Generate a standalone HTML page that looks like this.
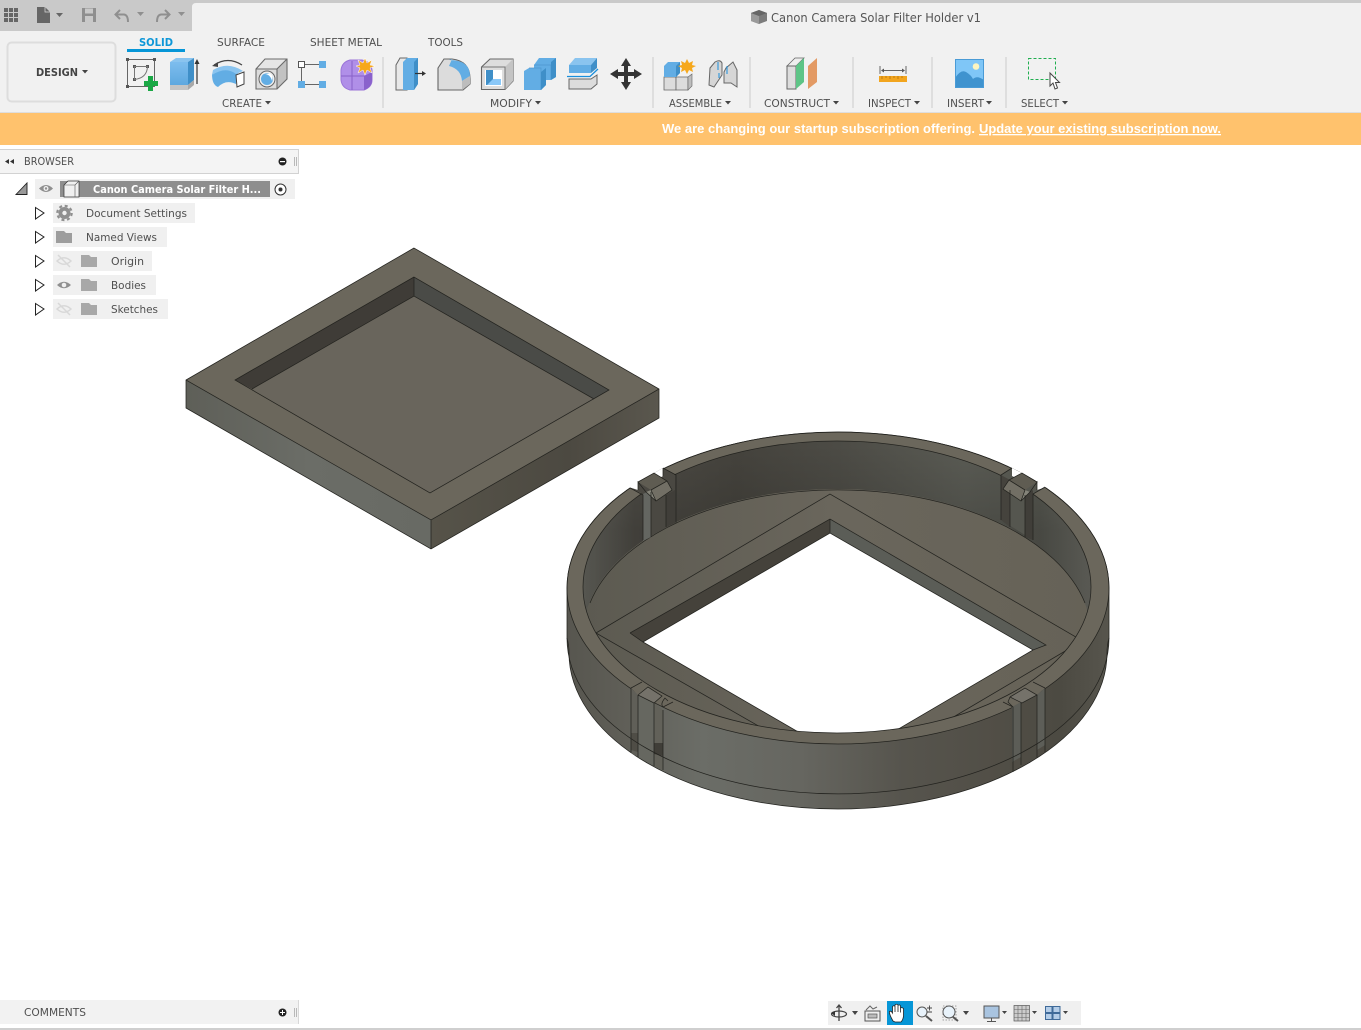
<!DOCTYPE html>
<html><head><meta charset="utf-8"><title>Canon Camera Solar Filter Holder v1</title>
<style>
html,body{margin:0;padding:0;background:#fff;width:1361px;height:1030px;overflow:hidden}
svg{display:block}
text{font-family:"DejaVu Sans","Liberation Sans",sans-serif;fill:#4f4f4f;font-size:11px}
.b{font-family:"Liberation Sans",Arial,sans-serif;font-weight:bold;fill:#fff;font-size:13px}
.e{fill:none;stroke:#23231f;stroke-width:.75}
</style></head><body>
<svg width="1361" height="1030" viewBox="0 0 1361 1030" xmlns="http://www.w3.org/2000/svg">
<defs>
<linearGradient id="fw" gradientUnits="userSpaceOnUse" x1="567" y1="0" x2="1109" y2="0">
<stop offset="0" stop-color="#57564f"/><stop offset=".1" stop-color="#5f5e57"/><stop offset=".25" stop-color="#6b6d67"/><stop offset=".43" stop-color="#666660"/><stop offset=".62" stop-color="#56544d"/><stop offset=".8" stop-color="#514e46"/><stop offset=".91" stop-color="#4c4a42"/><stop offset="1" stop-color="#57554d"/></linearGradient>
<linearGradient id="iw" gradientUnits="userSpaceOnUse" x1="584" y1="0" x2="1091" y2="0">
<stop offset="0" stop-color="#66665f"/><stop offset=".1" stop-color="#4d4b45"/><stop offset=".3" stop-color="#45433d"/><stop offset=".5" stop-color="#4c4b45"/><stop offset=".75" stop-color="#5a5b54"/><stop offset=".9" stop-color="#55564f"/><stop offset="1" stop-color="#6a6a63"/></linearGradient>
<linearGradient id="iwv" gradientUnits="userSpaceOnUse" x1="0" y1="445" x2="0" y2="530">
<stop offset="0" stop-color="#000" stop-opacity="0"/><stop offset="1" stop-color="#000" stop-opacity=".16"/></linearGradient>
<linearGradient id="fl" gradientUnits="userSpaceOnUse" x1="584" y1="0" x2="1091" y2="0">
<stop offset="0" stop-color="#5c5a51"/><stop offset=".5" stop-color="#6a665c"/><stop offset="1" stop-color="#666257"/></linearGradient>
<linearGradient id="pr" gradientUnits="userSpaceOnUse" x1="431" y1="0" x2="659" y2="0">
<stop offset="0" stop-color="#565349"/><stop offset=".6" stop-color="#4c4941"/><stop offset="1" stop-color="#5a574e"/></linearGradient>
<linearGradient id="pl" gradientUnits="userSpaceOnUse" x1="186" y1="0" x2="431" y2="0">
<stop offset="0" stop-color="#5e5f58"/><stop offset=".5" stop-color="#6b6d67"/><stop offset="1" stop-color="#686a64"/></linearGradient>
<linearGradient id="pw" gradientUnits="userSpaceOnUse" x1="414" y1="277" x2="405" y2="292">
<stop offset="0" stop-color="#58594f"/><stop offset=".5" stop-color="#464743"/><stop offset="1" stop-color="#56574f"/></linearGradient>
<linearGradient id="pw2" gradientUnits="userSpaceOnUse" x1="520" y1="335" x2="511" y2="350">
<stop offset="0" stop-color="#5a5b54"/><stop offset=".5" stop-color="#474844"/><stop offset="1" stop-color="#585952"/></linearGradient>
<linearGradient id="blu" x1="0" y1="0" x2="0" y2="1"><stop offset="0" stop-color="#7dbdee"/><stop offset="1" stop-color="#5ea8df"/></linearGradient>
<clipPath id="ci"><ellipse cx="837" cy="587" rx="254" ry="146"/></clipPath>
</defs>

<!-- top chrome -->
<rect x="0" y="0" width="1361" height="113" fill="#f1f1f1"/>
<rect x="0" y="0" width="1361" height="3" fill="#cacaca"/>
<path d="M0,0H196V3Q192,3 192,7V31H0Z" fill="#c9c9c9"/>
<rect x="0" y="112" width="1361" height="1" fill="#dedede"/>
<!-- top-left icons -->
<g fill="#666"><rect x="4" y="8" width="4" height="4"/><rect x="9" y="8" width="4" height="4"/><rect x="14" y="8" width="4" height="4"/><rect x="4" y="13" width="4" height="4"/><rect x="9" y="13" width="4" height="4"/><rect x="14" y="13" width="4" height="4"/><rect x="4" y="18" width="4" height="4"/><rect x="9" y="18" width="4" height="4"/><rect x="14" y="18" width="4" height="4"/></g>
<path d="M37,7H45L50,12V23H37Z" fill="#666"/><path d="M45,7V12H50" fill="none" stroke="#ddd" stroke-width=".7"/>
<path d="M56,13H63L59.500,17Z" fill="#666"/>
<path d="M82,8H96V22H82Z" fill="#8f8f8f"/><rect x="85" y="8.500" width="8" height="5" fill="#c9c9c9"/><rect x="85" y="16" width="8" height="6" fill="#c9c9c9"/>
<path d="M120,10L115.500,14.500L120,19M116,14.500H124Q128,15 128,22" fill="none" stroke="#8f8f8f" stroke-width="2"/>
<path d="M137,12H144L140.500,16Z" fill="#8f8f8f"/>
<path d="M165,10L169.500,14.500L165,19M169,14.500H161Q157,15 157,22" fill="none" stroke="#8f8f8f" stroke-width="2"/>
<path d="M178,12H185L181.500,16Z" fill="#8f8f8f"/>
<!-- title -->
<path d="M751,13L759,10L767,13V21L759,24L751,21Z" fill="#7c7c7c"/><path d="M751,13L759,16V24L751,21Z" fill="#9a9a9a"/><path d="M751,13L759,10L767,13L759,16Z" fill="#666"/>
<text x="771" y="22" style="font-size:12px;fill:#555" textLength="210" lengthAdjust="spacingAndGlyphs">Canon Camera Solar Filter Holder v1</text>

<!-- design button -->
<rect x="7.500" y="42.500" width="108" height="59" rx="4" fill="#f1f1f1" stroke="#dddddd" stroke-width="2"/>
<text x="36" y="76" style="font-weight:bold;fill:#444" textLength="42" lengthAdjust="spacingAndGlyphs">DESIGN</text>
<path d="M82,70H88L85,73.500Z" fill="#444"/>
<!-- tabs -->
<text x="139" y="46" style="fill:#0e97d8;font-weight:bold" textLength="34" lengthAdjust="spacingAndGlyphs">SOLID</text>
<rect x="127" y="49" width="58" height="3" fill="#0696d7"/>
<text x="217" y="46" textLength="48" lengthAdjust="spacingAndGlyphs">SURFACE</text>
<text x="310" y="46" textLength="72" lengthAdjust="spacingAndGlyphs">SHEET METAL</text>
<text x="428" y="46" textLength="35" lengthAdjust="spacingAndGlyphs">TOOLS</text>

<!-- sketch icon -->
<rect x="127.500" y="59.500" width="27" height="27" fill="none" stroke="#666"/>
<g fill="#555"><rect x="126" y="58" width="3" height="3"/><rect x="153" y="58" width="3" height="3"/><rect x="126" y="85" width="3" height="3"/><rect x="133" y="65" width="3" height="3"/><rect x="146" y="65" width="3" height="3"/><rect x="133" y="78" width="3" height="3"/></g>
<path d="M134.500,66.500H147.500Q147,78 134.500,79.500Z" fill="none" stroke="#777"/>
<path d="M148,76H153V81H158V86H153V91H148V86H144V81H148Z" fill="#1aa845"/>
<!-- extrude -->
<path d="M170,85H188V62H170Z" fill="url(#blu)"/><path d="M170,62L176,58H194L188,62Z" fill="#8ac4ef"/><path d="M188,62L194,58V80L188,85Z" fill="#3f8fc8"/>
<path d="M170,85H188V90H170Z" fill="#c4c4c4"/><path d="M188,85L194,80V85L188,90Z" fill="#a9a9a9"/>
<path d="M197,84V62" stroke="#333" stroke-width="1.200"/><path d="M194.500,64L197,59L199.500,64Z" fill="#333"/>
<!-- revolve -->
<path d="M214,65Q228,56 242,65" fill="none" stroke="#444" stroke-width="1.200"/><path d="M212,66L218,62V67Z" fill="#444"/>
<path d="M212,74Q228,62 238,72L236,84Q226,79 218,87Q212,85 212,74Z" fill="#62ade4"/><path d="M212,75Q226,66 236,74L243,71Q228,61 213,70Z" fill="#8ac4ef"/>
<path d="M236,75L244,72V84L237,87Z" fill="#fff" stroke="#444"/>
<!-- hole -->
<path d="M277,69L287,59V79L277,89Z" fill="#c2c2c2"/><path d="M256,69L265,59H287L277,69Z" fill="#e6e6e6"/><rect x="256" y="69" width="21" height="20" fill="#dcdcdc"/>
<path d="M256,69L265,59H287V79L277,89H256ZM256,69H277V89M277,69L287,59" fill="none" stroke="#6b6b6b" stroke-width="1.100"/>
<circle cx="267" cy="79" r="8" fill="#eee" stroke="#666"/><circle cx="267" cy="79" r="6" fill="#62ade4"/><path d="M262,74Q270,73 272,81Q274,76 270,73.500Z" fill="#fff"/>
<!-- pattern/ box -->
<rect x="298.500" y="61.500" width="6" height="6" fill="#fff" stroke="#555"/><rect x="319" y="61" width="7" height="7" fill="#62ade4"/><rect x="298" y="81" width="7" height="7" fill="#62ade4"/><rect x="319" y="81" width="7" height="7" fill="#62ade4"/>
<path d="M305,64.500H319M305,84.500H319M301.500,68V81" stroke="#666"/>
<!-- create form -->
<path d="M341,70Q342,62 350,60H362Q371,62 372,70V80Q372,87 364,90H350Q342,88 341,80Z" fill="#b08fe8" stroke="#9a74d8"/><path d="M341,76H364M352,61V90" stroke="#8862c8" fill="none"/><path d="M364,76L372,72V80Q372,87 364,90Z" fill="#8a62cc"/>
<path d="M365,58L367,63L372,60L370,65L375,66L370,68L372,73L367,70L365,75L363,70L358,73L360,68L356,66L360,65L358,60L363,63Z" fill="#f6a81c" stroke="#fff" stroke-width=".5"/>
<text x="222" y="107" textLength="40" lengthAdjust="spacingAndGlyphs">CREATE</text><path d="M265,101H271L268,104.500Z" fill="#444"/>
<rect x="382" y="57" width="2" height="51" fill="#dedede"/>

<!-- press pull -->
<path d="M396,65L400,58H407V90H396Z" fill="#e8e8e8" stroke="#666"/><path d="M403,62L407,58H418V84L414,90H403Z" fill="#62ade4"/><path d="M414,62V90L418,84V58Z" fill="#3f8fc8"/>
<path d="M415,73.500H423" stroke="#333" stroke-width="1.200"/><path d="M422,71L426,73.500L422,76Z" fill="#333"/>
<!-- fillet -->
<path d="M438,68L444,59H452Q470,61 470,79V84L463,90H438Z" fill="#dcdcdc" stroke="#666" stroke-width="1.100"/><path d="M449,60Q470,60 470,76L462,81Q461,69 449,66L452,59Z" fill="#62ade4"/><path d="M462,90V81L470,76V84Z" fill="#bdbdbd"/>
<!-- shell -->
<path d="M481.500,67L490,59H513V81L505,89.500H481.500Z" fill="#ddd" stroke="#666" stroke-width="1.100"/><path d="M505,67L513,59V81L505,89.500Z" fill="#c4c4c4"/><path d="M481.500,67H505V89.500" fill="none" stroke="#777"/>
<rect x="485" y="70" width="17" height="16" fill="#fff"/><path d="M486,70H493V79H501V85H486Z" fill="#3f8fc8"/><path d="M493,79H501V85H487Z" fill="#8ac8f8"/>
<!-- combine -->
<path d="M524,71L529,68H534V65L539,58H556V77L551,80H546V85L541,90H524Z" fill="#62ade4"/><path d="M534,65H551V80M529,68H541V90" fill="none" stroke="#4d97cf" stroke-width=".7"/><path d="M551,62L556,58V77L551,80Z" fill="#3f8fc8"/><path d="M541,72L546,68V85L541,90Z" fill="#3f8fc8"/>
<!-- split -->
<path d="M569,65L575,58H597L591,65Z" fill="#8ac4ef"/><rect x="569" y="65" width="22" height="8" fill="#62ade4"/><path d="M591,65L597,58V68L591,73Z" fill="#3f8fc8"/>
<path d="M567,76.500H590L598,69" fill="none" stroke="#1a8fdc" stroke-width="1.300"/>
<path d="M569,79H591L597,75V84L591,89H569Z" fill="#dcdcdc" stroke="#666"/>
<!-- move -->
<path d="M626,58L631,66H628V72H634V69L642,74L634,79V76H628V82H631L626,90L621,82H624V76H618V79L610,74L618,69V72H624V66H621Z" fill="#333"/>
<text x="490" y="107" textLength="42" lengthAdjust="spacingAndGlyphs">MODIFY</text><path d="M535,101H541L538,104.500Z" fill="#444"/>
<rect x="652" y="57" width="2" height="51" fill="#dedede"/>
<!-- new component -->
<path d="M664,77H676V90H664Z" fill="#dcdcdc" stroke="#666" stroke-width=".8"/><path d="M676,77H688V90H676Z" fill="#dcdcdc" stroke="#666" stroke-width=".8"/><path d="M688,77L692,74V86L688,90Z" fill="#bdbdbd" stroke="#666" stroke-width=".6"/>
<path d="M664,66L668,62H680V73L676,77H664Z" fill="#62ade4"/><path d="M676,66L680,62V73L676,77Z" fill="#3f8fc8"/>
<path d="M687,59L689,63L693,61L692,65L696,66L692,68L693,72L689,70L687,74L685,70L681,72L682,68L678,66L682,65L681,61L685,63Z" fill="#f6a81c"/>
<!-- joint -->
<path d="M710,68L715,62Q720,59 722,63V75L714,87L709,85Z" fill="#d6d6d6" stroke="#666"/><path d="M726,68L733,62L737,70V87L731,83H724V72Z" fill="#d6d6d6" stroke="#666"/>
<path d="M718,62V70M727,66V74M719,73V78" stroke="#1a8fdc" stroke-width="1" fill="none"/>
<text x="669" y="107" textLength="53" lengthAdjust="spacingAndGlyphs">ASSEMBLE</text><path d="M725,101H731L728,104.500Z" fill="#444"/>
<rect x="749" y="57" width="2" height="51" fill="#dedede"/>
<!-- construct -->
<path d="M787,66L795,58H804L796,66Z" fill="#eee" stroke="#666" stroke-width=".8"/><path d="M787,66H796V89H787Z" fill="#ddd" stroke="#666"/><path d="M796,66L804,58V82L796,89Z" fill="#5dc486"/><path d="M808,66L817,58V82L808,89Z" fill="#e39a64"/>
<text x="764" y="107" textLength="66" lengthAdjust="spacingAndGlyphs">CONSTRUCT</text><path d="M833,101H839L836,104.500Z" fill="#444"/>
<rect x="852" y="57" width="2" height="51" fill="#dedede"/>
<!-- inspect -->
<path d="M880,66V74M906,66V74" stroke="#666"/><path d="M882,70.500H904" stroke="#666"/><path d="M881,70.500L884,68.500V72.500ZM905,70.500L902,68.500V72.500Z" fill="#555"/>
<rect x="879" y="76" width="28" height="6" fill="#f2a51e"/><path d="M882,76V79M886,76V78M890,76V79M894,76V78M898,76V79M902,76V78" stroke="#a86c0a" stroke-width=".7"/>
<text x="868" y="107" textLength="43" lengthAdjust="spacingAndGlyphs">INSPECT</text><path d="M914,101H920L917,104.500Z" fill="#444"/>
<rect x="931" y="57" width="2" height="51" fill="#dedede"/>
<!-- insert -->
<rect x="955" y="59" width="29" height="29" fill="#7fc6f7"/><circle cx="976" cy="66.500" r="3.300" fill="#fdf5c0"/>
<path d="M955,78Q961,69 966,72Q971,75 973,79Q977,75 984,80V88H955Z" fill="#3f93cf"/><rect x="955.500" y="59.500" width="28" height="28" fill="none" stroke="#4a9bd6"/>
<text x="947" y="107" textLength="37" lengthAdjust="spacingAndGlyphs">INSERT</text><path d="M986,101H992L989,104.500Z" fill="#444"/>
<rect x="1005" y="57" width="2" height="51" fill="#dedede"/>
<!-- select -->
<rect x="1028.500" y="58.500" width="27" height="21" fill="none" stroke="#1fae4f" stroke-dasharray="3 2"/>
<path d="M1050,73V86L1053,83L1055,89L1057.500,88L1055.500,82.500H1059.500Z" fill="#fff" stroke="#444"/>
<text x="1021" y="107" textLength="38" lengthAdjust="spacingAndGlyphs">SELECT</text><path d="M1062,101H1068L1065,104.500Z" fill="#444"/>

<!-- banner -->
<rect x="0" y="113" width="1361" height="32" fill="#ffc26d"/>
<text class="b" x="662" y="133" textLength="313" lengthAdjust="spacingAndGlyphs">We are changing our startup subscription offering.</text>
<text class="b" x="979" y="133" textLength="242" lengthAdjust="spacingAndGlyphs" text-decoration="underline">Update your existing subscription now.</text>

<!-- browser -->
<rect x="0" y="149" width="299" height="24.500" fill="#f4f4f4"/>
<path d="M0,149.500H298.500V173.500H0" fill="none" stroke="#d2d2d2"/>
<path d="M9,159V164L5,161.500ZM14,159V164L10,161.500Z" fill="#333"/>
<text x="24" y="165" style="font-size:10.500px" textLength="50" lengthAdjust="spacingAndGlyphs">BROWSER</text>
<circle cx="282.500" cy="161.500" r="4" fill="#222"/><rect x="280" y="161" width="5" height="1.200" fill="#fff"/>
<path d="M294.500,157V166M296.500,157V166" stroke="#aaa" stroke-width=".8"/>

<path d="M16,194.500L27,183V194.500Z" fill="#999" stroke="#222" stroke-width=".9"/>
<rect x="35" y="179" width="260" height="20" fill="#f0f0f0"/>
<path d="M39,188.500Q46,181.500 53,188.500Q46,195.500 39,188.500Z" fill="#8f8f8f"/><circle cx="46" cy="188.500" r="2.500" fill="#f0f0f0"/><circle cx="46" cy="188.500" r="1.200" fill="#8f8f8f"/>
<rect x="60" y="181" width="210" height="16" fill="#8e8e8e"/>
<path d="M64,185L68,181H79V197H64Z" fill="#f0f0f0" stroke="#333" stroke-width=".7"/><path d="M64,185H75V197M75,185L79,181" fill="none" stroke="#555" stroke-width=".6"/>
<text x="93" y="193" style="fill:#fff;font-weight:bold" textLength="168" lengthAdjust="spacingAndGlyphs">Canon Camera Solar Filter H...</text>
<circle cx="280.500" cy="189.500" r="5.500" fill="#fff" stroke="#333"/><circle cx="280.500" cy="189.500" r="2" fill="#333"/>

<g fill="#f0f0f0"><rect x="53" y="203" width="142" height="20"/><rect x="53" y="227" width="114" height="20"/><rect x="53" y="251" width="99" height="20"/><rect x="53" y="275" width="103" height="20"/><rect x="53" y="299" width="115" height="20"/></g>
<g fill="#fff" stroke="#222" stroke-width="1"><path d="M35.500,207.500L44,213L35.500,219Z"/><path d="M35.500,231.500L44,237L35.500,243Z"/><path d="M35.500,255.500L44,261L35.500,267Z"/><path d="M35.500,279.500L44,285L35.500,291Z"/><path d="M35.500,303.500L44,309L35.500,315Z"/></g>
<circle cx="64.500" cy="213" r="6" fill="#8f8f8f"/><circle cx="64.500" cy="213" r="7.200" fill="none" stroke="#8f8f8f" stroke-width="2.200" stroke-dasharray="3 2.650"/><circle cx="64.500" cy="213" r="2.200" fill="#f0f0f0"/>
<text x="86" y="217" textLength="101" lengthAdjust="spacingAndGlyphs">Document Settings</text>
<path d="M56,231H64L66,233H72V243H56Z" fill="#9d9d9d"/><text x="86" y="241" textLength="71" lengthAdjust="spacingAndGlyphs">Named Views</text>
<path d="M81,255H89L91,257H97V267H81Z" fill="#a8a8a8"/><text x="111" y="265" textLength="33" lengthAdjust="spacingAndGlyphs">Origin</text>
<path d="M81,279H89L91,281H97V291H81Z" fill="#a8a8a8"/><text x="111" y="289" textLength="35" lengthAdjust="spacingAndGlyphs">Bodies</text>
<path d="M81,303H89L91,305H97V315H81Z" fill="#a8a8a8"/><text x="111" y="313" textLength="47" lengthAdjust="spacingAndGlyphs">Sketches</text>
<path d="M57,285Q64,278.500 71,285Q64,291.500 57,285Z" fill="#8f8f8f"/><circle cx="64" cy="285" r="2.300" fill="#f0f0f0"/>
<g fill="none" stroke="#d8d8d8" stroke-width="1.500"><path d="M57,261Q64,254.500 71,261Q64,267.500 57,261ZM58,255L70,267"/><path d="M57,309Q64,302.500 71,309Q64,315.500 57,309ZM58,303L70,315"/></g>

<!-- square plate -->
<path d="M186,380V408L431,549V520Z" fill="url(#pl)"/>
<path d="M431,520V549L659,418V389Z" fill="url(#pr)"/>
<path d="M414,248L186,380L431,520L659,389Z" fill="#6b675c"/>
<path d="M414,277L235,380L252,389L414,296Z" fill="#3f3c37"/>
<path d="M414,277L609,390L594,399L414,296Z" fill="#4a4b47"/>
<path d="M414,296L252,389L430,493L594,399Z" fill="#69655c"/>
<g class="e"><path d="M414,248L186,380V408L431,549L659,418V389ZM186,380L431,520L659,389M431,520V549"/><path d="M414,277L235,380L430,493L609,390ZM414,277V296M252,389L414,296L594,399"/></g>

<!-- ring -->
<path d="M569,638V653A269,156 0 0 0 1107,653V638Z" fill="url(#fw)"/>
<path d="M567,588V638A271,156 0 0 0 1109,638V588Z" fill="url(#fw)"/>
<ellipse cx="838" cy="588" rx="271" ry="156" fill="#6b675c"/>
<ellipse cx="837" cy="587" rx="254" ry="146" fill="url(#iw)"/>
<ellipse cx="837" cy="587" rx="254" ry="146" fill="url(#iwv)"/>
<g clip-path="url(#ci)">
<ellipse cx="837" cy="635" rx="254" ry="146" fill="url(#fl)"/>
<path d="M830,519L630,633L643,642L830,533Z" fill="#45423b"/>
<path d="M830,519L1046,645L1033,650L830,533Z" fill="#5b5d57"/>
<path d="M830,533L1033,650L871,745H821L643,642Z" fill="#fff"/>
<g class="e"><path d="M596,633L830,494L1081,640M630,633L830,519L1046,645L1033,650L830,533L643,642L630,633M830,519V533M596,633L762,728M1067,650L945,722"/><path d="M643,642L800,733M1033,650L895,731"/></g>
</g>
<g class="e">
<path d="M567,588V638M1109,638V588A271,156 0 0 0 567,588"/>
<path d="M567,638Q569,645 569,653A269,156 0 0 0 1107,653Q1107,645 1109,638"/>
<ellipse cx="838" cy="588" rx="271" ry="156"/>
<ellipse cx="837" cy="587" rx="254" ry="146"/>
<path d="M590,603A254,146 0 0 1 1085,603"/>
</g>

<!-- back-left notch -->
<path d="M630,488L643,494V540L675,523V475L663,468L654,473L638,482Z" fill="#4a4842"/>
<path d="M643,494L651,490V537L643,541Z" fill="#646661"/><path d="M666,495L675,490V523L666,527Z" fill="#403e39"/>
<path d="M628,484L638,482V490L630,487.500ZM654,473L663,468V476L658,479Z" fill="#fff"/>
<path d="M638,482L654,473L667,481L651,490Z" fill="#5f5c52"/><path d="M651,490L667,481L672,490L656,501Z" fill="#726f65"/><path d="M646,492L651,490L656,501Z" fill="#85847a"/>
<g class="e"><path d="M630,488L643,495V540M638,482L654,473L667,481L672,490L656,501L646,492L638,482V490M651,490L667,481M651,490L656,501M651,492V537M666,495V527M663,468L676,475V523M663,468V476"/></g>
<!-- back-right notch -->
<path d="M1045,488L1033,494V540L1001,520V475L1012,468L1022,473L1037,482Z" fill="#55564f"/>
<path d="M1001,475L1010,480V527L1001,520Z" fill="#45433d"/><path d="M1025,495L1033,490V540L1025,537Z" fill="#403e39"/>
<path d="M1047,484L1037,482V490L1045,487.500ZM1022,473L1012,468V476L1018,479Z" fill="#fff"/>
<path d="M1037,482L1022,473L1009,480L1025,490Z" fill="#5f5c52"/><path d="M1025,490L1009,480L1003,489L1021,501Z" fill="#726f65"/><path d="M1030,492L1025,490L1021,501Z" fill="#85847a"/>
<g class="e"><path d="M1045,487L1033,494V540M1037,482L1022,473L1009,480L1003,489L1021,501L1030,492L1037,482V490M1025,490L1009,480M1025,490L1021,501M1010,490V527M1025,495V537M1012,468L1001,475V520"/></g>
<!-- front-left notch -->
<path d="M631,688L638,695V757L631,753Z" fill="#605f58"/><path d="M631,733H638V752L631,750Z" fill="#4f4d46"/>
<path d="M654,703L663,710V770L654,766Z" fill="#626159"/><path d="M654,743H663V756L654,754Z" fill="#403e38"/>
<path d="M638,695L654,703V766L638,757Z" fill="#666760"/>
<path d="M638,695L648,687L662,696L654,703Z" fill="#75726a"/>
<path d="M631,688L642,682L648,687L638,695Z" fill="#6b675c"/>
<g class="e"><path d="M642,682L631,688V753M638,695V757M638,695L648,687L662,696L654,703L638,695M654,703V766M663,710V770M663,707L673,702M663,707Q660,704 665,698L668,701"/></g>
<!-- front-right notch -->
<path d="M1012,707L1021,702V757L1012,762Z" fill="#5c5d57"/>
<path d="M1037,695L1045,688V745L1037,750Z" fill="#5d5e58"/>
<path d="M1010,697L1025,688L1037,695L1022,703Z" fill="#75726a"/>
<path d="M1025,688L1033,682L1045,688L1037,695Z" fill="#6b675c"/>
<g class="e"><path d="M1003,702L1013,707V772M1021,703V765M1010,697L1025,688L1037,695L1022,703L1010,697M1037,695V758M1045,688V752M1033,682L1045,688M1010,697L1008,702L1013,707"/></g>
<path class="e" d="M567,638A271,156 0 0 0 1109,638"/>

<!-- comments -->
<rect x="0" y="1000" width="299" height="24" fill="#f2f2f2"/>
<path d="M298.500,1000V1024" stroke="#d8d8d8"/>
<text x="24" y="1016" style="font-size:10.500px" textLength="62" lengthAdjust="spacingAndGlyphs">COMMENTS</text>
<circle cx="282.500" cy="1012.500" r="4" fill="#222"/><path d="M280,1012.500H285M282.500,1010V1015" stroke="#fff"/>
<path d="M294.500,1008V1017M296.500,1008V1017" stroke="#aaa" stroke-width=".8"/>
<rect x="0" y="1028" width="1361" height="2" fill="#cfcfcf"/>

<!-- nav bar -->
<rect x="828" y="1001" width="253" height="24" fill="#f0f0f0"/>
<rect x="887" y="1001" width="26" height="24" fill="#0696d7"/>
<path d="M839,1006V1021M836.500,1008L839,1005L841.500,1008" fill="none" stroke="#444" stroke-width="1.300"/><ellipse cx="839" cy="1014" rx="7.500" ry="3" fill="none" stroke="#444" stroke-width="1.200"/><path d="M831,1013L835,1011V1016Z" fill="#333"/>
<path d="M852,1011H858L855,1015Z" fill="#444"/>
<path d="M865,1011H880V1021H865Z" fill="#eee" stroke="#555"/><rect x="868" y="1014" width="9" height="4" fill="#bbb" stroke="#555" stroke-width=".7"/><path d="M866,1010L870,1006L873,1009L877,1007" fill="none" stroke="#666"/>
<path d="M893,1021Q889,1014 889.500,1011.500Q891,1010.500 892.500,1013V1006.500Q894,1005 895,1006.500V1012V1005Q896.500,1003.500 898,1005V1012V1005.500Q899.500,1004 900.500,1006V1012.500V1008Q902,1007 903.500,1008.500V1016Q903,1020 901,1022H895Z" fill="#fff" stroke="#222" stroke-width=".8"/>
<circle cx="922" cy="1012" r="5" fill="#e8f2fa" stroke="#555"/><path d="M926,1016L932,1021" stroke="#555" stroke-width="2"/><path d="M927,1008H932M929.500,1005.500V1010.500M927,1012H932" stroke="#444" stroke-width=".9" fill="none"/>
<rect x="943" y="1006" width="13" height="14" fill="none" stroke="#888" stroke-dasharray="1.500 1.500" stroke-width=".8"/><circle cx="949" cy="1012" r="6" fill="#e8f2fa" stroke="#555"/><path d="M953,1017L958,1021" stroke="#555" stroke-width="2"/>
<path d="M963,1011H969L966,1015Z" fill="#444"/>
<rect x="984" y="1006" width="15" height="12" fill="#a9c4e0" stroke="#555"/><path d="M991.500,1018V1021M987,1021.500H996" stroke="#555"/>
<path d="M1002,1011H1007L1004.500,1014Z" fill="#444"/>
<rect x="1014" y="1005.500" width="15.500" height="15.500" fill="#ccc" stroke="#555" stroke-width=".7"/><path d="M1018,1005.500V1021M1022,1005.500V1021M1026,1005.500V1021M1014,1009.500H1029.500M1014,1013.500H1029.500M1014,1017.500H1029.500" stroke="#666" stroke-width=".6"/>
<path d="M1032,1011H1037L1034.500,1014Z" fill="#444"/>
<g fill="#b4cde8" stroke="#3f6a99"><rect x="1045.500" y="1006.500" width="6.500" height="6"/><rect x="1053" y="1006.500" width="7" height="6"/><rect x="1045.500" y="1013.500" width="6.500" height="6"/><rect x="1053" y="1013.500" width="7" height="6"/></g>
<path d="M1063,1011H1068L1065.500,1014Z" fill="#444"/>
</svg>
</body></html>
